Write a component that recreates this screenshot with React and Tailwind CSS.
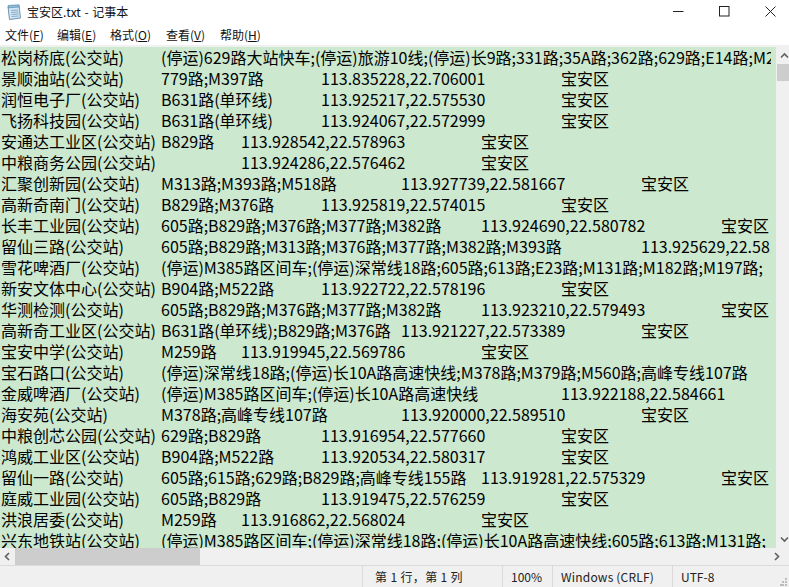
const rows = [
"松岗桥底(公交站)\t(停运)629路大站快车;(停运)旅游10线;(停运)长9路;331路;35A路;362路;629路;E14路;M217路",
"景顺油站(公交站)\t779路;M397路\t113.835228,22.706001\t宝安区",
"润恒电子厂(公交站)\tB631路(单环线)\t113.925217,22.575530\t宝安区",
"飞扬科技园(公交站)\tB631路(单环线)\t113.924067,22.572999\t宝安区",
"安通达工业区(公交站)\tB829路\t113.928542,22.578963\t宝安区",
"中粮商务公园(公交站)\t\t113.924286,22.576462\t宝安区",
"汇聚创新园(公交站)\tM313路;M393路;M518路\t113.927739,22.581667\t宝安区",
"高新奇南门(公交站)\tB829路;M376路\t113.925819,22.574015\t宝安区",
"长丰工业园(公交站)\t605路;B829路;M376路;M377路;M382路\t113.924690,22.580782\t宝安区",
"留仙三路(公交站)\t605路;B829路;M313路;M376路;M377路;M382路;M393路\t113.925629,22.581234",
"雪花啤酒厂(公交站)\t(停运)M385路区间车;(停运)深常线18路;605路;613路;E23路;M131路;M182路;M197路;",
"新安文体中心(公交站)\tB904路;M522路\t113.922722,22.578196\t宝安区",
"华测检测(公交站)\t605路;B829路;M376路;M377路;M382路\t113.923210,22.579493\t宝安区",
"高新奇工业区(公交站)\tB631路(单环线);B829路;M376路\t113.921227,22.573389\t宝安区",
"宝安中学(公交站)\tM259路\t113.919945,22.569786\t宝安区",
"宝石路口(公交站)\t(停运)深常线18路;(停运)长10A路高速快线;M378路;M379路;M560路;高峰专线107路",
"金威啤酒厂(公交站)\t(停运)M385路区间车;(停运)长10A路高速快线\t\t113.922188,22.584661",
"海安苑(公交站)\tM378路;高峰专线107路\t113.920000,22.589510\t宝安区",
"中粮创芯公园(公交站)\t629路;B829路\t113.916954,22.577660\t宝安区",
"鸿威工业区(公交站)\tB904路;M522路\t113.920534,22.580317\t宝安区",
"留仙一路(公交站)\t605路;615路;629路;B829路;高峰专线155路\t113.919281,22.575329\t宝安区",
"庭威工业园(公交站)\t605路;B829路\t113.919475,22.576259\t宝安区",
"洪浪居委(公交站)\tM259路\t113.916862,22.568024\t宝安区",
"兴东地铁站(公交站)\t(停运)M385路区间车;(停运)深常线18路;(停运)长10A路高速快线;605路;613路;M131路;",
];

const Menu = ({ label, k, className }) => (
  <span className={className}>
    {label}(<span className="underline">{k}</span>)
  </span>
);

const Chevron = ({ d, className }) => (
  <svg width="9" height="9" viewBox="0 0 9 9" className={className} fill="none" stroke="#606060" strokeWidth="1.6">
    <path d={d} />
  </svg>
);

export default function App() {
  return (
    <div
      className="w-[789px] h-[587px] flex flex-col bg-white overflow-hidden text-black"
      style={{ fontFamily: '"Noto Sans CJK SC", "Noto Sans", sans-serif' }}
    >
      <div className="h-[24px] flex items-center shrink-0">
        <svg width="16" height="17" viewBox="0 0 16 17" className="ml-[6px] mt-[1px]">
          <path d="M2 2.5 L13 1.5 L14.5 14 L3.5 15.5 Z" fill="#cfe6f5" stroke="#6f94b0" strokeWidth="1" />
          <path d="M2.2 1.5 L13 .8 L13.2 3 L2.4 3.8 Z" fill="#8fc0e0" stroke="#5d89a8" strokeWidth=".7" />
          <path d="M5 6.5 L12 6 M5 8.5 L12.3 8 M5.3 10.5 L12.5 10 M5.5 12.5 L12.7 12" stroke="#7d9db5" strokeWidth=".8" />
        </svg>
        <span className="ml-[5px] text-[12px] leading-[24px] text-[#111] [word-spacing:1px]">宝安区.txt - 记事本</span>
        <div className="ml-auto flex items-center mb-[2px]">
          <svg width="11" height="11" viewBox="0 0 11 11" className="mr-[35px]"><path d="M0 5.5H10.5" stroke="#222" strokeWidth="1" /></svg>
          <svg width="11" height="11" viewBox="0 0 11 11" className="mr-[35px]"><rect x=".5" y=".5" width="9.5" height="9.5" fill="none" stroke="#222" strokeWidth="1" /></svg>
          <svg width="11" height="11" viewBox="0 0 11 11" className="mr-[13px]"><path d="M.5 .5L10.5 10.5M10.5 .5L.5 10.5" stroke="#222" strokeWidth="1" /></svg>
        </div>
      </div>

      <div className="h-[21px] flex items-center pl-[5px] text-[12px] leading-[21px] text-[#111] shrink-0">
        <Menu label="文件" k="F" className="w-[52px]" />
        <Menu label="编辑" k="E" className="w-[53px]" />
        <Menu label="格式" k="O" className="w-[56px]" />
        <Menu label="查看" k="V" className="w-[54px]" />
        <Menu label="帮助" k="H" />
      </div>
      <div className="h-[2px] bg-[#f0f0f0] shrink-0" />

      <div className="flex h-[501px] shrink-0">
        <div className="w-[776px] bg-[#cce8cf] pl-[1px]">
          <div className="w-[770px] h-full overflow-hidden">
            {rows.map((r, i) => (
              <div key={i} className="h-[21px] text-[16px] leading-[21px] whitespace-pre [tab-size:80px]">
                {r}
              </div>
            ))}
          </div>
        </div>
        <div className="w-[13px] bg-[#f0f0f0] flex flex-col items-center">
          <div className="h-[17px] flex items-center justify-center pl-[3px]">
            <Chevron d="M1 6.5L4.5 3L8 6.5" />
          </div>
          <div className="w-full h-[17px] bg-[#cdcdcd] border-l border-[#f0f0f0]" />
          <div className="mt-auto h-[17px] flex items-center justify-center pl-[3px]">
            <Chevron d="M1 2.5L4.5 6L8 2.5" />
          </div>
        </div>
      </div>

      <div className="h-[17px] bg-[#f0f0f0] flex items-center shrink-0">
        <div className="w-[15px] flex justify-center"><Chevron d="M6 1L2.5 4.5L6 8" /></div>
        <div className="w-[185px] h-full bg-[#cdcdcd]" />
        <div className="ml-auto w-[21px] pr-[8px] flex justify-end"><Chevron d="M3 1L6.5 4.5L3 8" /></div>
      </div>

      <div className="flex-1 bg-[#f0f0f0] border-t border-[#dadada] flex text-[12px] text-[#222] relative">
        <div className="w-[362px]" />
        <div className="w-[140px] border-l border-[#dadada] pl-[12px] leading-[21px] whitespace-pre tracking-[0.35px]">第 1 行，第 1 列</div>
        <div className="w-[50px] border-l border-[#dadada] pl-[8px] leading-[21px]">100%</div>
        <div className="w-[120px] border-l border-[#dadada] pl-[8px] leading-[21px] tracking-[0.2px]">Windows (CRLF)</div>
        <div className="flex-1 border-l border-[#dadada] pl-[8px] leading-[21px]">UTF-8</div>
        <svg width="8" height="8" viewBox="0 0 8 8" className="absolute right-[1px] bottom-[1px]" fill="#bdbdbd">
          <rect x="5" y="0" width="2" height="2" />
          <rect x="2" y="3" width="2" height="2" />
          <rect x="5" y="3" width="2" height="2" />
          <rect x="0" y="6" width="2" height="2" />
          <rect x="2" y="6" width="2" height="2" />
          <rect x="5" y="6" width="2" height="2" />
        </svg>
      </div>
    </div>
  );
}
